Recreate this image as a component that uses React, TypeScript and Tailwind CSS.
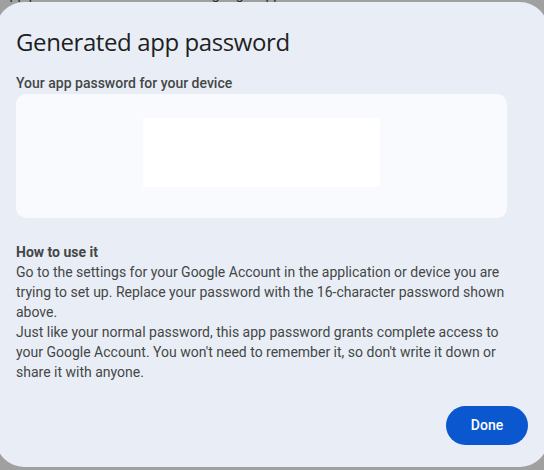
import React from "react";

export default function App() {
  return (
    <div className="relative h-[470px] w-[544px] overflow-hidden bg-[#a0a0a0] font-['Roboto',sans-serif]">
      <div className="mt-[-14px] pl-[2px] text-[14px] leading-[16px] text-[#2a2a2a] whitespace-nowrap">
        app passwords could be used for google apps and services
      </div>
      <div className="absolute left-[-4px] top-[2px] flex h-[465px] w-[552px] flex-col rounded-[28px] bg-[#e9eef6] pl-[20px] pt-[24px]">
        <h1 className="font-['Open_Sans',sans-serif] text-[24px] leading-[32px] font-normal text-[#1f1f1f] tracking-[-0.4px]">
          Generated app password
        </h1>
        <div className="w-[491px]">
          <p className="mt-[15px] text-[14px] leading-[20px] font-medium text-[#444746]">
            Your app password for your device
          </p>
          <div className="mt-[1px] flex h-[124px] items-start justify-center rounded-[10px] bg-[#f8fafd] pt-[24px]">
            <div className="h-[69px] w-[237px] bg-white" />
          </div>
          <div className="mt-[24px] text-[14px] leading-[20px] text-[#444746]">
            <p className="font-bold">How to use it</p>
            <p>
              Go to the settings for your Google Account in the application or device you are
              trying to set up. Replace your password with the 16-character password shown above.
            </p>
            <p>
              Just like your normal password, this app password grants complete access to your
              Google Account. You won't need to remember it, so don't write it down or share it
              with anyone.
            </p>
          </div>
        </div>
        <div className="mt-[24px] flex justify-end pr-[20px]">
          <button className="h-[39px] w-[82px] rounded-full bg-[#0b57d0] text-[14px] font-medium text-white">
            Done
          </button>
        </div>
      </div>
    </div>
  );
}
